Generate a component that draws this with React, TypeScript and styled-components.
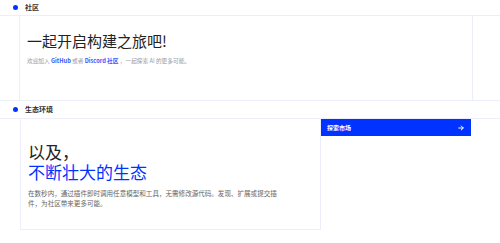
import styled, { createGlobalStyle } from "styled-components";

const GlobalStyle = createGlobalStyle`
  html, body {
    margin: 0;
    padding: 0;
    background: #ffffff;
  }
  body {
    font-family: "Noto Sans CJK SC", "Noto Sans", sans-serif;
    color: #222;
  }
`;

const LINE = "#eceefb";
const BLUE = "#0033ff";

const Page = styled.div`
  width: 500px;
  height: 243px;
  overflow: hidden;
  display: flex;
  flex-direction: column;
`;

const SectionHeader = styled.div<{ $h: number }>`
  height: ${(p) => p.$h}px;
  display: flex;
  align-items: center;
  gap: 7px;
  padding-left: 13px;
  border-bottom: 1px solid ${LINE};
  box-sizing: border-box;
`;

const Dot = styled.span`
  width: 5px;
  height: 5px;
  border-radius: 50%;
  background: ${BLUE};
`;

const SectionLabel = styled.span`
  font-size: 7px;
  font-weight: 600;
  color: #333;
  line-height: 1;
`;

const CommunityRow = styled.div`
  height: 85px;
  box-sizing: border-box;
  border-bottom: 1px solid ${LINE};
  display: grid;
  grid-template-columns: 19px 454px 1fr;
`;

const CommunityCell = styled.div`
  border-left: 1px solid ${LINE};
  border-right: 1px solid ${LINE};
  padding: 16px 0 0 7px;
`;

const Title = styled.h1<{ $size: number }>`
  margin: 0;
  font-size: ${(p) => p.$size}px;
  line-height: ${(p) => Math.round(p.$size * 1.18)}px;
  font-weight: 400;
  color: #222;
`;

const Accent = styled.span`
  color: ${BLUE};
`;

const Subtitle = styled.p`
  margin: 7px 0 0;
  font-size: 5.7px;
  line-height: 8px;
  color: #9a9aa2;
  white-space: nowrap;
`;

const Link = styled.a`
  color: #3a55ff;
  font-weight: 600;
  text-decoration: none;
`;

const EcoRow = styled.div`
  display: grid;
  grid-template-columns: 20px 301px 150px 1fr;
  align-items: start;
`;

const EcoPanel = styled.div`
  height: 111px;
  box-sizing: border-box;
  border-left: 1px solid ${LINE};
  border-right: 1px solid ${LINE};
  border-bottom: 1px solid ${LINE};
  padding: 23px 0 0 7px;
`;

const Body = styled.p`
  margin: 6px 0 0;
  width: 252px;
  font-size: 6.55px;
  line-height: 10px;
  color: #666;
`;

const ExploreButton = styled.button`
  height: 17px;
  width: 150px;
  border: none;
  background: ${BLUE};
  color: #fff;
  display: flex;
  align-items: center;
  justify-content: space-between;
  padding: 0 7px 0 6px;
  font-family: inherit;
  font-size: 6px;
  font-weight: 700;
  cursor: pointer;
`;

const Arrow = () => (
  <svg width="6" height="6" viewBox="0 0 12 12" fill="none" stroke="#fff" strokeWidth="2" strokeLinecap="round" strokeLinejoin="round">
    <path d="M1.5 6h9" />
    <path d="M6.5 2l4 4-4 4" />
  </svg>
);

export default function App() {
  return (
    <Page>
      <GlobalStyle />
      <SectionHeader $h={16}>
        <Dot />
        <SectionLabel>社区</SectionLabel>
      </SectionHeader>
      <CommunityRow>
        <div />
        <CommunityCell>
          <Title $size={15}>一起开启构建之旅吧!</Title>
          <Subtitle>
            欢迎加入 <Link>GitHub</Link> 或者 <Link>Discord 社区</Link> ，一起探索 AI 的更多可能。
          </Subtitle>
        </CommunityCell>
        <div />
      </CommunityRow>
      <SectionHeader $h={18}>
        <Dot />
        <SectionLabel>生态环境</SectionLabel>
      </SectionHeader>
      <EcoRow>
        <div />
        <EcoPanel>
          <Title $size={17}>
            以及，
            <br />
            <Accent>不断壮大的生态</Accent>
          </Title>
          <Body>在数秒内，通过插件即时调用任意模型和工具，无需修改源代码。发现、扩展或提交插件，为社区带来更多可能。</Body>
        </EcoPanel>
        <ExploreButton>
          <span>探索市场</span>
          <Arrow />
        </ExploreButton>
        <div />
      </EcoRow>
    </Page>
  );
}
